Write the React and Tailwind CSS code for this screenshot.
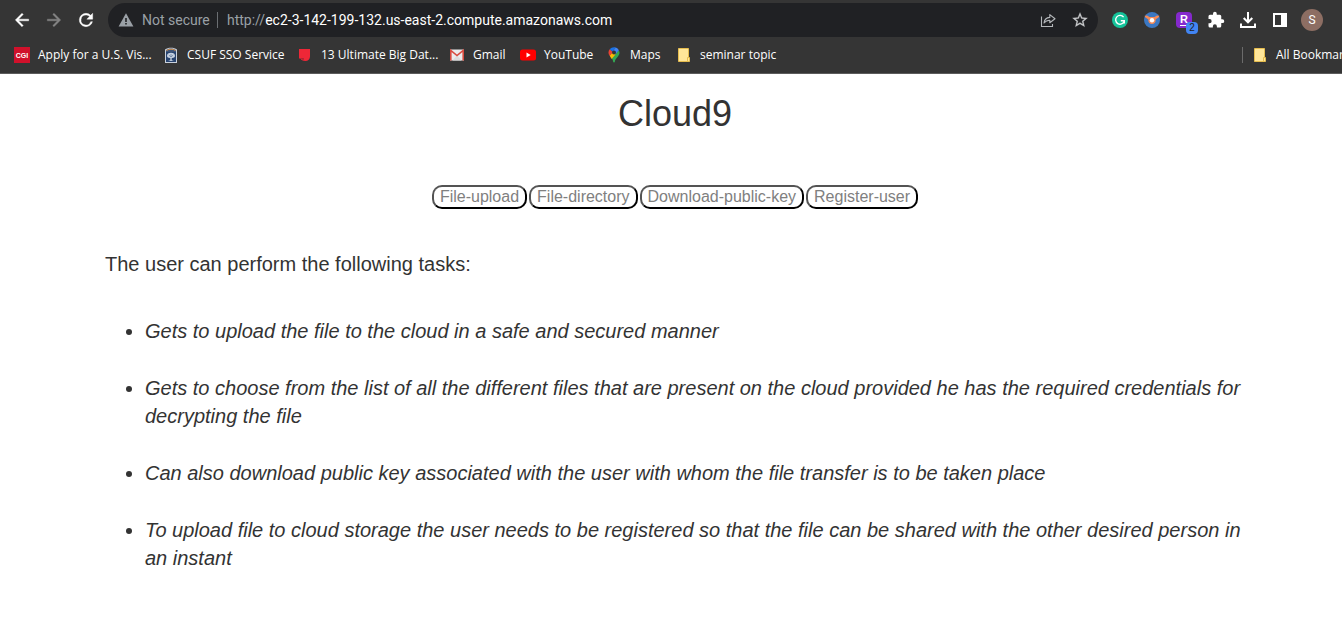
import React from "react";

const svg = "block shrink-0";

const BackIcon = ({ className }) => (
  <svg viewBox="0 0 24 24" className={`${svg} h-5 w-5 ${className}`} fill="currentColor">
    <path d="M20 11H7.83l5.59-5.59L12 4l-8 8 8 8 1.41-1.41L7.83 13H20z" stroke="currentColor" strokeWidth=".5" />
  </svg>
);

const ReloadIcon = () => (
  <svg viewBox="0 0 24 24" className={`${svg} h-5 w-5`} fill="currentColor">
    <path
      d="M17.65 6.35A7.96 7.96 0 0 0 12 4a8 8 0 1 0 7.73 10h-2.08A6 6 0 1 1 12 6c1.66 0 3.14.69 4.22 1.78L13 11h7V4z"
      stroke="currentColor"
      strokeWidth=".5"
    />
  </svg>
);

const WarningIcon = () => (
  <svg viewBox="0 0 16 16" className={`${svg} h-4 w-4 text-[#9aa0a6]`}>
    <path d="M8 1.2 15.4 14.4H.6z" fill="currentColor" />
    <path d="M7.2 6h1.6v4H7.2zM7.2 11h1.6v1.6H7.2z" fill="#202124" />
  </svg>
);

const ShareIcon = () => (
  <svg viewBox="0 0 16 16" className={`${svg} h-4 w-4`} fill="none" stroke="#b4b7ba" strokeWidth="1.1">
    <path d="M1.5 4.500v10h11V12" />
    <path d="M4 11c.4-3.6 2.400-5.400 5.800-5.600V2.600L15 6.700l-5.200 4V8.200C7.300 8.200 5.500 9 4 11z" strokeLinejoin="round" />
  </svg>
);

const StarIcon = () => (
  <svg viewBox="0 0 24 24" className={`${svg} h-[18px] w-[18px]`} fill="#c8cacc">
    <path d="m22 9.240-7.190-.62L12 2 9.190 8.630 2 9.240l5.460 4.730L5.820 21 12 17.270 18.180 21l-1.630-7.030zM12 15.400l-3.760 2.270 1-4.280-3.320-2.880 4.380-.38L12 6.100l1.710 4.040 4.380.38-3.320 2.880 1 4.280z" stroke="#c8cacc" strokeWidth=".3" />
  </svg>
);

const GrammarlyIcon = () => (
  <svg viewBox="0 0 16 16" className={`${svg} h-4 w-4`}>
    <circle cx="8" cy="8" r="8" fill="#15c39a" />
    <path d="M11.600 5.200A4.400 4.400 0 1 0 12.200 9.300" fill="none" stroke="#fff" strokeWidth="1.400" />
    <path d="M8.800 8.800h3.500v2.800" fill="none" stroke="#fff" strokeWidth="1.400" />
  </svg>
);

const DroneIcon = () => (
  <svg viewBox="0 0 16 16" className={`${svg} h-4 w-4`}>
    <circle cx="8" cy="8" r="8" fill="#3b78c3" />
    <path d="M.6 3.800 3 3.600l2.500 1.500h5L13 3.600l2.400.2-.6 1.500-3.200 2.200a3.700 3.700 0 1 1-7.200 0L1.200 5.300z" fill="#f58a57" />
    <circle cx="8" cy="8.200" r="2.200" fill="#fff" />
  </svg>
);

const PuzzleIcon = () => (
  <svg viewBox="0 0 24 24" className={`${svg} h-[18px] w-[18px]`} fill="#fff">
    <path d="M20.500 11H19V7a2 2 0 0 0-2-2h-4V3.500a2.500 2.500 0 0 0-5 0V5H4a2 2 0 0 0-2 2v3.800h1.500a2.700 2.700 0 0 1 0 5.400H2V20a2 2 0 0 0 2 2h3.800v-1.500a2.700 2.700 0 0 1 5.400 0V22H17a2 2 0 0 0 2-2v-4h1.500a2.500 2.500 0 0 0 0-5z" />
  </svg>
);

const DownloadIcon = () => (
  <svg viewBox="0 0 16 16" className={`${svg} h-4 w-4`} fill="none" stroke="#fff" strokeWidth="2">
    <path d="M8 0v10M3.700 6 8 10.300 12.300 6" />
    <path d="M1 11.500V15h14v-3.500" />
  </svg>
);

const PanelIcon = () => (
  <svg viewBox="0 0 14 14" className={`${svg} h-[14px] w-[14px]`}>
    <path d="M0 0h14v14H0zM2 2v10h6V2z" fill="#fff" fillRule="evenodd" />
  </svg>
);

const CgiIcon = () => (
  <span className="flex h-4 w-4 items-center justify-center bg-[#d0112b] font-['Liberation_Sans',sans-serif] text-[7px] leading-none font-bold text-white">
    CGI
  </span>
);

const CsufIcon = () => (
  <svg viewBox="0 0 16 16" className={`${svg} h-4 w-4`}>
    <path d="M2 4V2.500C5 .2 11 .2 14 2.500V16H2z" fill="#c9d1dc" />
    <path d="M3 3.200C5.500.8 10.500.8 13 3.200V5H3z" fill="#3e5578" />
    <path d="M3.500 3.500C6 1.800 10 1.800 12.500 3.500" fill="none" stroke="#e79a4b" strokeWidth=".9" />
    <path d="M3 5h10v10H3z" fill="#27436f" />
    <path d="M4 9c0-2 1.500-3.200 4-3.200S12 7 12 9c0 1.300-1.300 2-3 2h-.3v2.200l2.300.8H5l2.300-.8V11H7c-1.700 0-3-.7-3-2z" fill="#c6d1e0" />
    <path d="m5.800 8 2.200 2 2.200-2M8 7v3" fill="none" stroke="#5f789c" strokeWidth=".7" />
  </svg>
);

const RedTagIcon = () => (
  <svg viewBox="0 0 16 16" className={`${svg} h-4 w-4`}>
    <path d="M2 2h11v7.500A4.500 4.500 0 0 1 8.500 14C5.500 14 4 13 3.500 11.500H2z" fill="#ee2737" />
    <path d="M4.500 11c.4 1 1.500 1.300 2.500.8" fill="none" stroke="#7d2530" />
  </svg>
);

const GmailIcon = () => (
  <svg viewBox="0 0 16 16" className={`${svg} h-4 w-4`}>
    <path d="M1 2.500h14v11H1z" fill="#ececec" />
    <path d="M3.500 13.500 8 8.500l4.500 5" fill="#dcdcdc" />
    <path d="M1.800 13.500V3.500L8 8.500l6.200-5v10" fill="none" stroke="#d94c40" strokeWidth="1.600" />
  </svg>
);

const YoutubeIcon = () => (
  <svg viewBox="0 0 16 16" className={`${svg} h-4 w-4`}>
    <rect y="2.500" width="16" height="11" rx="2.500" fill="#f00" />
    <path d="m6.500 5.500 4.200 2.500-4.200 2.500z" fill="#fff" />
  </svg>
);

const MapsIcon = () => (
  <svg viewBox="0 0 16 16" className={`${svg} h-4 w-4`}>
    <path d="M13.500 5.500c0 4-4.300 5.200-4.700 9.600 0 .6-1.500.6-1.600 0-.1-1.700-.7-2.800-1.500-3.800l7-7.800c.5.500.8 1.200.8 2z" fill="#34a853" />
    <path d="m3.600 8.600 3-3.600 2.900 2.600-3.800 4.500C4.900 11 4.100 10 3.600 8.600z" fill="#fbbc04" />
    <path d="M3.700 2.200 7 5 3.700 8.800C2 6.700 2.100 4 3.700 2.200z" fill="#ea4335" />
    <path d="M3.700 2.200C5 .7 7.500-.3 9.700.4L6.500 4.500z" fill="#1a73e8" />
    <path d="M9.700.4c1.500.4 2.500 1.500 3.200 2.900L9.500 7.300 6.500 4.500z" fill="#4285f4" />
    <circle cx="8" cy="5.600" r="2" fill="#353535" />
  </svg>
);

const FolderIcon = () => (
  <svg viewBox="0 0 16 16" className={`${svg} h-4 w-4`}>
    <path d="M2.500 1.500h10v9h1v4h-11z" fill="#ffe699" stroke="#e6bd4e" />
    <path d="M11.500 14.500v-4h1" fill="none" stroke="#e6bd4e" />
  </svg>
);

const bookmarks = [
  { label: "Apply for a U.S. Vis...", Icon: CgiIcon, width: "w-[149px]" },
  { label: "CSUF SSO Service", Icon: CsufIcon, width: "w-[134px]" },
  { label: "13 Ultimate Big Dat...", Icon: RedTagIcon, width: "w-[152px]" },
  { label: "Gmail", Icon: GmailIcon, width: "w-[71px]" },
  { label: "YouTube", Icon: YoutubeIcon, width: "w-[86px]" },
  { label: "Maps", Icon: MapsIcon, width: "w-[70px]" },
  { label: "seminar topic", Icon: FolderIcon, width: "w-[100px]" },
];

const actions = ["File-upload", "File-directory", "Download-public-key", "Register-user"];

const tasks = [
  "Gets to upload the file to the cloud in a safe and secured manner",
  "Gets to choose from the list of all the different files that are present on the cloud provided he has the required credentials for decrypting the file",
  "Can also download public key associated with the user with whom the file transfer is to be taken place",
  "To upload file to cloud storage the user needs to be registered so that the file can be shared with the other desired person in an instant",
];

const toolButton = "flex h-8 w-8 shrink-0 items-center justify-center";

function Toolbar() {
  return (
    <div className="flex items-center pt-[3px] pr-[22px] pl-[6px]">
      <button aria-label="Back" className={toolButton}><BackIcon className="text-white" /></button>
      <button aria-label="Forward" className={toolButton}><BackIcon className="rotate-180 text-[#858585]" /></button>
      <button aria-label="Reload" className={toolButton}><ReloadIcon /></button>
      <div className="ml-[6px] flex h-[34px] min-w-0 flex-1 items-center rounded-full bg-[#202124] pr-[2px] pl-[10px] font-[Roboto,sans-serif] text-sm">
        <WarningIcon />
        <span className="ml-2 w-[67px] whitespace-nowrap text-[#9aa0a6]">Not secure</span>
        <span className="mx-2 h-4 w-px bg-[#6b6e72]" />
        <label htmlFor="address" className="pl-px text-[#9aa0a6]">http://</label>
        <input
          id="address"
          type="text"
          defaultValue="ec2-3-142-199-132.us-east-2.compute.amazonaws.com"
          className="min-w-0 flex-1 bg-transparent text-white outline-none"
        />
        <button aria-label="Share" className={toolButton}><ShareIcon /></button>
        <button aria-label="Bookmark this page" className={toolButton}><StarIcon /></button>
      </div>
      <div className="ml-[6px] flex">
        <button aria-label="Grammarly" className={toolButton}><GrammarlyIcon /></button>
        <button aria-label="Extension" className={toolButton}><DroneIcon /></button>
        <button aria-label="Rakuten" className={toolButton}>
          <span className="relative flex h-4 w-4 items-center justify-center rounded-sm bg-[#8529cd] font-['Liberation_Sans',sans-serif] text-[11px] leading-none font-bold text-white">
            <span className="border-b border-white">R</span>
            <span className="absolute top-[10px] left-[10px] flex h-3 w-3 items-center justify-center rounded-sm bg-[#4285f4] text-[10px] font-normal text-[#202124]">2</span>
          </span>
        </button>
        <button aria-label="Extensions" className={toolButton}><PuzzleIcon /></button>
        <button aria-label="Downloads" className={toolButton}><DownloadIcon /></button>
        <button aria-label="Side panel" className={toolButton}><PanelIcon /></button>
        <button aria-label="Profile" className={toolButton}>
          <span className="flex h-[22px] w-[22px] items-center justify-center rounded-full bg-[#8d6e63] font-[Roboto,sans-serif] text-xs text-white">S</span>
        </button>
      </div>
    </div>
  );
}

function BookmarksBar() {
  return (
    <nav aria-label="Bookmarks" className="flex h-9 items-center pl-[14px] text-xs whitespace-nowrap">
      {bookmarks.map(({ label, Icon, width }) => (
        <a key={label} href="#" className={`flex shrink-0 items-center gap-2 ${width}`}>
          <Icon />
          {label}
        </a>
      ))}
      <a href="#" className="ml-auto flex w-[108px] shrink-0 items-center border-l border-[#6b6b6b] pl-[9px]">
        <FolderIcon />
        <span className="ml-2">All Bookmarks</span>
      </a>
    </nav>
  );
}

export default function App() {
  return (
    <div className="min-h-screen overflow-x-hidden bg-white">
      <div className="w-[calc(100%+8px)]">
        <header className="border-b border-[#5c5c5c] bg-[#353535] font-['Open_Sans',sans-serif] text-white">
          <Toolbar />
          <BookmarksBar />
        </header>
        <main className="mx-auto max-w-[1170px] px-[15px] pt-5 font-['Liberation_Sans',Arial,sans-serif] text-[#333]">
          <h1 className="text-center text-4xl leading-10">Cloud9</h1>
          <div className="mt-[51px] flex flex-wrap justify-center gap-[2px]">
            {actions.map((label) => (
              <button
                key={label}
                className="h-6 rounded-[10px] border-2 border-black px-[6px] text-base leading-5 text-[#808080] [border-style:outset]"
              >
                {label}
              </button>
            ))}
          </div>
          <p className="mt-[41px] text-xl leading-7">The user can perform the following tasks:</p>
          <ul className="mt-[39px] flex list-disc flex-col gap-[29px] pl-10 text-xl leading-7">
            {tasks.map((task) => (
              <li key={task}><em>{task}</em></li>
            ))}
          </ul>
        </main>
      </div>
    </div>
  );
}
